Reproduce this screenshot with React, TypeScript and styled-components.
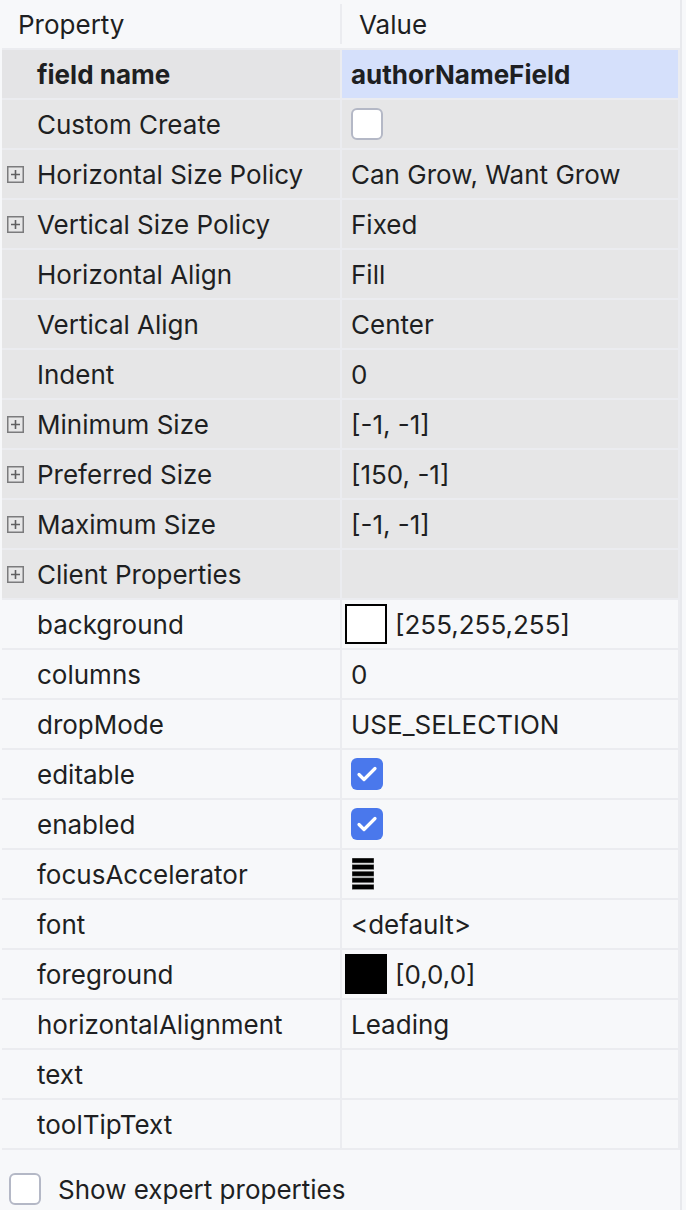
import React from 'react';
import styled, { createGlobalStyle } from 'styled-components';

const GlobalStyle = createGlobalStyle`
  html, body {
    margin: 0;
    padding: 0;
    background: #f7f8fa;
  }
  body {
    font-family: Inter, "Noto Sans", sans-serif;
    color: #1e1f22;
    -webkit-font-smoothing: antialiased;
  }
`;

const Panel = styled.div`
  width: 680px;
  height: 1210px;
  border-right: 2px solid #e8e9ed;
  background: #f7f8fa;
  overflow: hidden;
`;

const Header = styled.div`
  display: grid;
  grid-template-columns: 342px 1fr;
  height: 48px;
  align-items: center;
  font-size: 26px;
`;

const HeaderCell = styled.div<{ $divider?: boolean }>`
  display: flex;
  align-items: center;
  height: 40px;
  padding-left: ${(p) => (p.$divider ? '17px' : '18px')};
  border-left: ${(p) => (p.$divider ? '2px solid #ebecf0' : 'none')};
  margin-left: ${(p) => (p.$divider ? '-2px' : '0')};
`;

const Body = styled.div`
  padding-left: 2px;
`;

const Grid = styled.div`
  display: grid;
  grid-template-columns: 338px 336px;
  grid-auto-rows: 48px;
  gap: 2px;
  padding: 2px 2px 2px 0;
  background: #ebecf0;
`;

type Tone = 'group' | 'plain' | 'name' | 'selected';

const toneBg: Record<Tone, string> = {
  group: '#e6e6e7',
  plain: '#f7f8fa',
  name: '#e4e4e6',
  selected: '#d5e0fb',
};

const NameCell = styled.div<{ $tone: Tone; $bold?: boolean }>`
  display: flex;
  align-items: center;
  background: ${(p) => toneBg[p.$tone]};
  font-size: 26px;
  font-weight: ${(p) => (p.$bold ? 700 : 400)};
  padding-left: 5px;
  white-space: nowrap;
`;

const ExpandSlot = styled.span`
  display: inline-flex;
  width: 30px;
  flex: none;
  align-items: center;
`;

const ValueCell = styled.div<{ $tone: Tone; $bold?: boolean }>`
  display: flex;
  align-items: center;
  gap: 8px;
  background: ${(p) => toneBg[p.$tone]};
  font-size: 26px;
  font-weight: ${(p) => (p.$bold ? 700 : 400)};
  padding-left: 9px;
  white-space: nowrap;
`;

const CheckBox = styled.span<{ $checked?: boolean }>`
  display: inline-flex;
  align-items: center;
  justify-content: center;
  box-sizing: border-box;
  width: 32px;
  height: 32px;
  flex: none;
  border-radius: 6px;
  background: ${(p) => (p.$checked ? '#4a78ec' : '#ffffff')};
  border: ${(p) => (p.$checked ? 'none' : '2px solid #b4b8c6')};
`;

const Swatch = styled.span<{ $color: string }>`
  display: inline-block;
  box-sizing: border-box;
  width: 42px;
  height: 40px;
  margin-left: -6px;
  background: ${(p) => p.$color};
  border: 2px solid #000;
`;

const Footer = styled.div`
  display: flex;
  align-items: center;
  gap: 17px;
  padding: 23px 0 0 9px;
  font-size: 26px;
`;

const ExpandIcon = () => (
  <svg width="17" height="17" viewBox="0 0 17 17">
    <rect x="0.75" y="0.75" width="15.5" height="15.5" fill="none" stroke="#7b7b7d" strokeWidth="1.5" />
    <path d="M4 8.5h9M8.5 4v9" stroke="#5e5e60" strokeWidth="1.6" />
  </svg>
);

const CheckMark = () => (
  <svg width="22" height="18" viewBox="0 0 22 18">
    <path d="M3 9.5l5 5L19 3.5" fill="none" stroke="#fff" strokeWidth="3.2" strokeLinecap="round" strokeLinejoin="round" />
  </svg>
);

const AcceleratorIcon = () => (
  <svg width="22" height="32" viewBox="0 0 22 32" style={{ marginLeft: 1 }}>
    {[0, 1, 2, 3, 4].map((i) => (
      <rect key={i} x="0" y={i * 6.6} width="22" height="5" fill="#000" stroke="#9a9a9a" strokeWidth="0.6" />
    ))}
  </svg>
);

type Row = {
  name: string;
  value?: React.ReactNode;
  tone: Tone;
  valueTone?: Tone;
  expand?: boolean;
  bold?: boolean;
};

const rows: Row[] = [
  { name: 'field name', value: 'authorNameField', tone: 'name', valueTone: 'selected', bold: true },
  { name: 'Custom Create', value: <CheckBox />, tone: 'group' },
  { name: 'Horizontal Size Policy', value: 'Can Grow, Want Grow', tone: 'group', expand: true },
  { name: 'Vertical Size Policy', value: 'Fixed', tone: 'group', expand: true },
  { name: 'Horizontal Align', value: 'Fill', tone: 'group' },
  { name: 'Vertical Align', value: 'Center', tone: 'group' },
  { name: 'Indent', value: '0', tone: 'group' },
  { name: 'Minimum Size', value: '[-1, -1]', tone: 'group', expand: true },
  { name: 'Preferred Size', value: '[150, -1]', tone: 'group', expand: true },
  { name: 'Maximum Size', value: '[-1, -1]', tone: 'group', expand: true },
  { name: 'Client Properties', tone: 'group', expand: true },
  {
    name: 'background',
    value: (
      <>
        <Swatch $color="#ffffff" />
        <span>[255,255,255]</span>
      </>
    ),
    tone: 'plain',
  },
  { name: 'columns', value: '0', tone: 'plain' },
  { name: 'dropMode', value: 'USE_SELECTION', tone: 'plain' },
  { name: 'editable', value: <CheckBox $checked><CheckMark /></CheckBox>, tone: 'plain' },
  { name: 'enabled', value: <CheckBox $checked><CheckMark /></CheckBox>, tone: 'plain' },
  { name: 'focusAccelerator', value: <AcceleratorIcon />, tone: 'plain' },
  { name: 'font', value: '<default>', tone: 'plain' },
  {
    name: 'foreground',
    value: (
      <>
        <Swatch $color="#000000" />
        <span>[0,0,0]</span>
      </>
    ),
    tone: 'plain',
  },
  { name: 'horizontalAlignment', value: 'Leading', tone: 'plain' },
  { name: 'text', tone: 'plain' },
  { name: 'toolTipText', tone: 'plain' },
];

export default function App() {
  return (
    <>
      <GlobalStyle />
      <Panel>
        <Header>
          <HeaderCell>Property</HeaderCell>
          <HeaderCell $divider>Value</HeaderCell>
        </Header>
        <Body>
          <Grid>
            {rows.map((r) => (
              <React.Fragment key={r.name}>
                <NameCell $tone={r.tone} $bold={r.bold}>
                  <ExpandSlot>{r.expand && <ExpandIcon />}</ExpandSlot>
                  {r.name}
                </NameCell>
                <ValueCell $tone={r.valueTone ?? r.tone} $bold={r.bold}>
                  {r.value}
                </ValueCell>
              </React.Fragment>
            ))}
          </Grid>
        </Body>
        <Footer>
          <CheckBox />
          <span>Show expert properties</span>
        </Footer>
      </Panel>
    </>
  );
}
